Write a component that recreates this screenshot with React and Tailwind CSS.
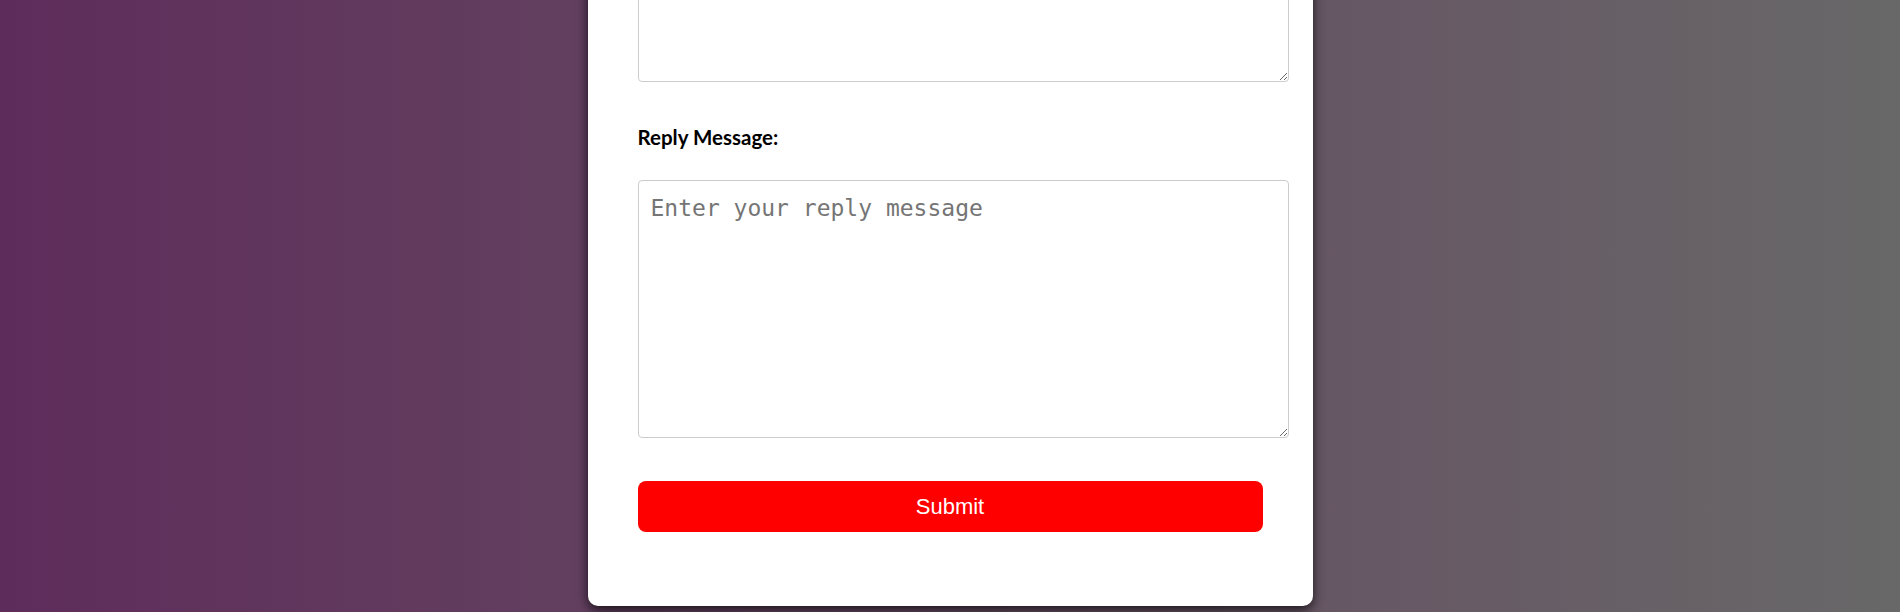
import React, { useState } from 'react';

const ReplyForm = () => {
    const [reply, setReply] = useState('');

    return (
        <div className="bg-white rounded-[10px] shadow-[0_4px_12px_rgba(0,0,0,0.75)] w-[725px] px-[50px] pb-[74px]">
            {/* original message (scrolled past) */}
            <textarea
                readOnly
                className="box-content block w-full h-[200px] p-3 border border-[#cccccc] rounded-[4px] bg-white"
            />

            <label
                htmlFor="reply"
                className="block mt-[43px] text-[20.5px] leading-[24px] font-bold text-black"
                style={{ fontFamily: 'Lato, "Open Sans", sans-serif' }}
            >
                Reply Message:
            </label>

            <textarea
                id="reply"
                value={reply}
                onChange={(e) => setReply(e.target.value)}
                placeholder="Enter your reply message"
                className="box-content block w-full h-[232px] mt-[31px] p-3 border border-[#cccccc] rounded-[4px] bg-white text-[23px] leading-[30px] text-black placeholder:text-[#757575] outline-none"
                style={{ fontFamily: '"DejaVu Sans Mono", monospace' }}
            />

            <button
                type="submit"
                className="block w-full h-[51px] mt-[43.5px] bg-[#ff0000] text-white text-[22px] rounded-lg"
                style={{ fontFamily: '"Liberation Sans", Arial, sans-serif' }}
            >
                Submit
            </button>
        </div>
    );
};

const App = () => {
    return (
        <div className="h-[612px] w-full overflow-hidden bg-linear-to-r from-[#5e2c5b] to-[#686868] flex flex-col items-center justify-end pb-[6px]">
            <ReplyForm />
        </div>
    );
};

export default App;
